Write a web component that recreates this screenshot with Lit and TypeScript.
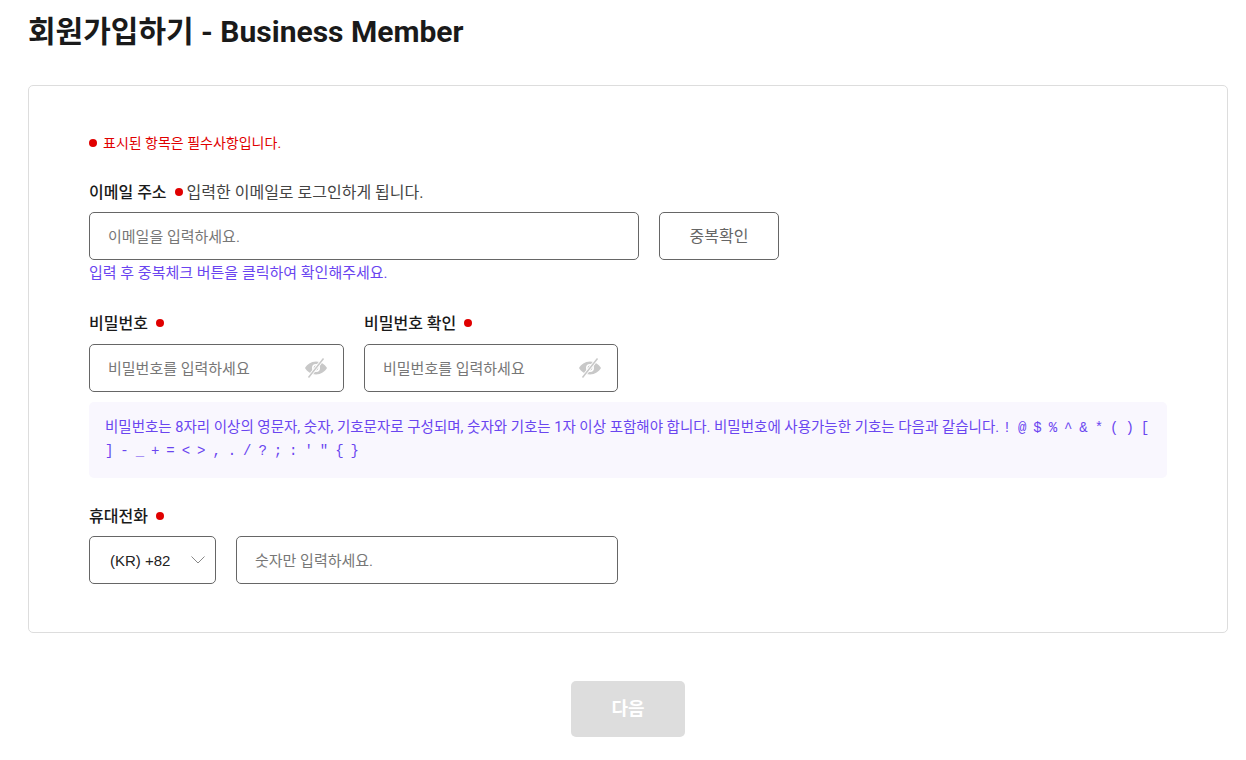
import { LitElement, html, css, svg } from "lit";
import { customElement } from "lit/decorators.js";

const eye = svg`<svg class="eye" width="24" height="24" viewBox="0 0 24 24" aria-hidden="true">
  <path fill="#c8c8c8" d="M12 5.5C7 5.5 3 8.6 1 12c2 3.400 6 6.500 11 6.500S21 15.400 23 12c-2-3.400-6-6.500-11-6.500Zm0 10.500a4 4 0 1 1 0-8 4 4 0 0 1 0 8Z"/>
  <circle cx="12" cy="12" r="2.400" fill="#c8c8c8"/>
  <path d="M19.500 2.500 4.500 21.500" stroke="#fff" stroke-width="3.400"/>
  <path d="M19.500 2.500 4.500 21.500" stroke="#c8c8c8" stroke-width="1.500"/>
</svg>`;

@customElement("app-root")
export class AppRoot extends LitElement {
  static styles = css`
    :host {
      display: block;
      width: 1246px;
      height: 760px;
      overflow: hidden;
      background: #fff;
      box-sizing: border-box;
      padding: 0 18px 0 28px;
      font-family: Roboto, "Noto Sans CJK KR", sans-serif;
      color: #1a1a1a;
    }
    * { box-sizing: border-box; }
    h1 {
      margin: 0;
      height: 85px;
      padding-top: 12px;
      font-size: 30px;
      line-height: 40px;
      font-weight: 700;
      color: #1a1a1a;
    }
    .card {
      height: 548px;
      border: 1px solid #dddddd;
      border-radius: 5px;
      padding: 46px 60px 0 60px;
    }
    .dot {
      display: inline-block;
      width: 8px;
      height: 8px;
      border-radius: 50%;
      background: #e00000;
      flex: none;
    }
    .req {
      display: flex;
      align-items: center;
      gap: 6px;
      height: 20px;
      font-size: 14px;
      color: #e00000;
    }
    .req .dot { margin-top: 2px; }
    .label {
      display: flex;
      align-items: center;
      height: 24px;
      font-size: 16px;
      font-weight: 500;
      color: #1a1a1a;
    }
    .label .dot { margin-left: 8px; margin-top: 2px; }
    .hint {
      font-size: 16px;
      font-weight: 400;
      color: #444;
    }
    .field {
      display: flex;
      align-items: center;
      height: 48px;
      border: 1px solid #666;
      border-radius: 5px;
      padding: 0 18px 2px;
      font-size: 15px;
      color: #777;
      background: #fff;
      justify-content: space-between;
    }
    .email-label { margin-top: 27px; }
    .email-label .dot { margin-left: 8px; margin-right: 4px; }
    .row { display: flex; margin-top: 9px; }
    .email { width: 550px; }
    .check {
      width: 120px;
      height: 48px;
      margin-left: 20px;
      border: 1px solid #666;
      border-radius: 5px;
      padding-bottom: 2px;
      display: flex;
      align-items: center;
      justify-content: center;
      font-size: 16px;
      color: #666;
    }
    .note {
      height: 26px;
      font-size: 15px;
      line-height: 27px;
      color: #6a45f0;
      white-space: nowrap;
    }
    .pw-row {
      display: flex;
      margin-top: 24px;
      gap: 20px;
    }
    .pw-a { width: 255px; }
    .pw-b { width: 254px; }
    .pw-row .row { margin-top: 10px; }
    .pw-row .field { width: 100%; padding-right: 15px; }
    .eye { flex: none; margin-top: 2px; }
    .info {
      margin-top: 10px;
      height: 76px;
      width: 1078px;
      background: #f9f7fe;
      border-radius: 5px;
      padding: 14px 16px 0 16px;
      font-size: 14.500px;
      line-height: 23px;
      color: #6a45f0;
    }
    .sym {
      font-family: "Liberation Mono", "DejaVu Sans Mono", monospace;
      font-size: 14px;
      line-height: 1;
      letter-spacing: -0.730px;
    }
    .phone-label { margin-top: 25px; }
    .select {
      width: 127px;
      height: 48px;
      border: 1px solid #666;
      border-radius: 5px;
      display: flex;
      align-items: center;
      justify-content: space-between;
      padding: 0 9px 0 20px;
      font-family: "Liberation Sans", Arial, sans-serif;
      font-size: 15px;
      color: #222;
    }
    .tel { width: 382px; margin-left: 20px; }
    .footer {
      display: flex;
      justify-content: center;
      margin-top: 48px;
    }
    .next {
      width: 114px;
      height: 56px;
      border-radius: 5px;
      background: #dddddd;
      color: #fff;
      font-size: 18px;
      font-weight: 700;
      padding-bottom: 5px;
      display: flex;
      align-items: center;
      justify-content: center;
    }
  `;

  render() {
    return html`
      <h1>회원가입하기 - Business Member</h1>
      <div class="card">
        <div class="req"><span class="dot"></span>표시된 항목은 필수사항입니다.</div>

        <div class="label email-label">
          이메일 주소<span class="dot"></span><span class="hint">입력한 이메일로 로그인하게 됩니다.</span>
        </div>
        <div class="row">
          <div class="field email">이메일을 입력하세요.</div>
          <div class="check">중복확인</div>
        </div>
        <div class="note">입력 후 중복체크 버튼을 클릭하여 확인해주세요.</div>

        <div class="pw-row">
          <div class="pw-a">
            <div class="label">비밀번호<span class="dot"></span></div>
            <div class="row"><div class="field">비밀번호를 입력하세요${eye}</div></div>
          </div>
          <div class="pw-b">
            <div class="label">비밀번호 확인<span class="dot"></span></div>
            <div class="row"><div class="field">비밀번호를 입력하세요${eye}</div></div>
          </div>
        </div>

        <div class="info">
          비밀번호는 8자리 이상의 영문자, 숫자, 기호문자로 구성되며, 숫자와 기호는 1자 이상 포함해야 합니다. 비밀번호에 사용가능한 기호는 다음과 같습니다. <span class="sym">! @ $ % ^ &amp; * ( ) [ ] - _ + = &lt; &gt; , . / ? ; : ' " { }</span>
        </div>

        <div class="label phone-label">휴대전화<span class="dot"></span></div>
        <div class="row">
          <div class="select">
            (KR) +82
            <svg width="16" height="16" viewBox="0 0 16 16" aria-hidden="true"><path d="M1.500 4.500 8 11l6.500-6.500" fill="none" stroke="#888" stroke-width="1"/></svg>
          </div>
          <div class="field tel">숫자만 입력하세요.</div>
        </div>
      </div>
      <div class="footer"><div class="next">다음</div></div>
    `;
  }
}
